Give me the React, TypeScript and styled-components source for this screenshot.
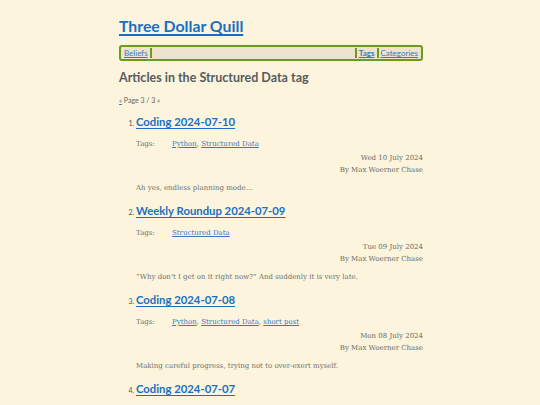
import React from "react";
import styled, { createGlobalStyle } from "styled-components";

const GlobalStyle = createGlobalStyle`
  html, body {
    margin: 0;
    padding: 0;
    background: #fcf4dc;
  }
  body {
    font-family: "DejaVu Serif", "Liberation Serif", serif;
    color: #666;
  }
`;

const Page = styled.div`
  width: 304px;
  margin: 0 auto;
  padding-top: 15px;
  padding-left: 2px;
`;

const SiteTitle = styled.a`
  display: block;
  font-family: "Lato", "Open Sans", sans-serif;
  font-weight: 700;
  font-size: 15.8px;
  line-height: 22px;
  color: #1a6fc2;
  text-decoration: underline;
  text-decoration-thickness: 1.5px;
  text-underline-offset: 2px;
`;

const Nav = styled.nav`
  margin-top: 8px;
  display: flex;
  align-items: center;
  height: 12px;
  border: 2px solid #6a9a20;
  border-radius: 3px;
  background: #ece4cf;
  padding: 0 2px;
  font-family: "Lato", "Open Sans", sans-serif;
  font-size: 8px;
`;

const NavLink = styled.a<{ $bold?: boolean }>`
  color: #3a78c0;
  text-decoration: underline;
  font-weight: ${(p) => (p.$bold ? 700 : 400)};
  padding: 0 1px;
`;

const NavSep = styled.span`
  width: 2px;
  height: 10px;
  background: #6a9a20;
  margin: 0 1px;
`;

const NavSpacer = styled.span`
  flex: 1;
`;

const Heading = styled.h2`
  margin: 9px 0 0;
  font-family: "Lato", "Open Sans", sans-serif;
  font-weight: 700;
  font-size: 12.5px;
  color: #555c60;
`;

const Pager = styled.div`
  margin-top: 11px;
  font-family: "Lato", "Open Sans", sans-serif;
  font-size: 7px;
  color: #666;
  a {
    color: #3a78c0;
  }
`;

const List = styled.ol`
  margin: 7px 0 0;
  padding-left: 17px;
  list-style: decimal;
  li::marker {
    font-family: "Lato", "Open Sans", sans-serif;
    font-size: 7px;
    color: #555;
  }
`;

const Item = styled.li`
  height: 89px;
`;

const ItemTitle = styled.a`
  font-family: "Lato", "Open Sans", sans-serif;
  font-weight: 700;
  font-size: 11.3px;
  line-height: 18px;
  color: #1a6fc2;
  text-decoration: underline;
  text-decoration-thickness: 1px;
  text-underline-offset: 2px;
`;

const TagsRow = styled.div`
  margin-top: 8px;
  display: flex;
  font-size: 7px;
  line-height: 10px;
  a {
    color: #3a78c0;
  }
`;

const TagsLabel = styled.span`
  width: 36px;
  color: #707070;
`;

const Meta = styled.div`
  margin-top: 3px;
  text-align: right;
  font-size: 7px;
  line-height: 12px;
  color: #6a6a6a;
`;

const Excerpt = styled.p`
  margin: 7px 0 0;
  font-size: 7px;
  line-height: 10px;
  color: #707070;
`;

type Post = {
  title: string;
  tags: string[];
  date: string;
  excerpt: string;
};

const posts: Post[] = [
  {
    title: "Coding 2024-07-10",
    tags: ["Python", "Structured Data"],
    date: "Wed 10 July 2024",
    excerpt: "Ah yes, endless planning mode…",
  },
  {
    title: "Weekly Roundup 2024-07-09",
    tags: ["Structured Data"],
    date: "Tue 09 July 2024",
    excerpt: "\u201CWhy don\u2019t I get on it right now?\u201D And suddenly it is very late.",
  },
  {
    title: "Coding 2024-07-08",
    tags: ["Python", "Structured Data", "short post"],
    date: "Mon 08 July 2024",
    excerpt: "Making careful progress, trying not to over-exert myself.",
  },
  {
    title: "Coding 2024-07-07",
    tags: ["Python", "Structured Data"],
    date: "Sun 07 July 2024",
    excerpt: "",
  },
];

export default function App() {
  return (
    <>
      <GlobalStyle />
      <Page>
        <SiteTitle href="#">Three Dollar Quill</SiteTitle>
        <Nav>
          <NavLink href="#">Beliefs</NavLink>
          <NavSep />
          <NavSpacer />
          <NavSep />
          <NavLink href="#" $bold>
            Tags
          </NavLink>
          <NavSep />
          <NavLink href="#">Categories</NavLink>
        </Nav>
        <Heading>Articles in the Structured Data tag</Heading>
        <Pager>
          <a href="#">«</a> Page 3 / 3 »
        </Pager>
        <List>
          {posts.map((p) => (
            <Item key={p.title}>
              <ItemTitle href="#">{p.title}</ItemTitle>
              <TagsRow>
                <TagsLabel>Tags:</TagsLabel>
                <span>
                  {p.tags.map((t, i) => (
                    <React.Fragment key={t}>
                      {i > 0 && ", "}
                      <a href="#">{t}</a>
                    </React.Fragment>
                  ))}
                </span>
              </TagsRow>
              <Meta>
                {p.date}
                <br />
                By Max Woerner Chase
              </Meta>
              {p.excerpt && <Excerpt>{p.excerpt}</Excerpt>}
            </Item>
          ))}
        </List>
      </Page>
    </>
  );
}
